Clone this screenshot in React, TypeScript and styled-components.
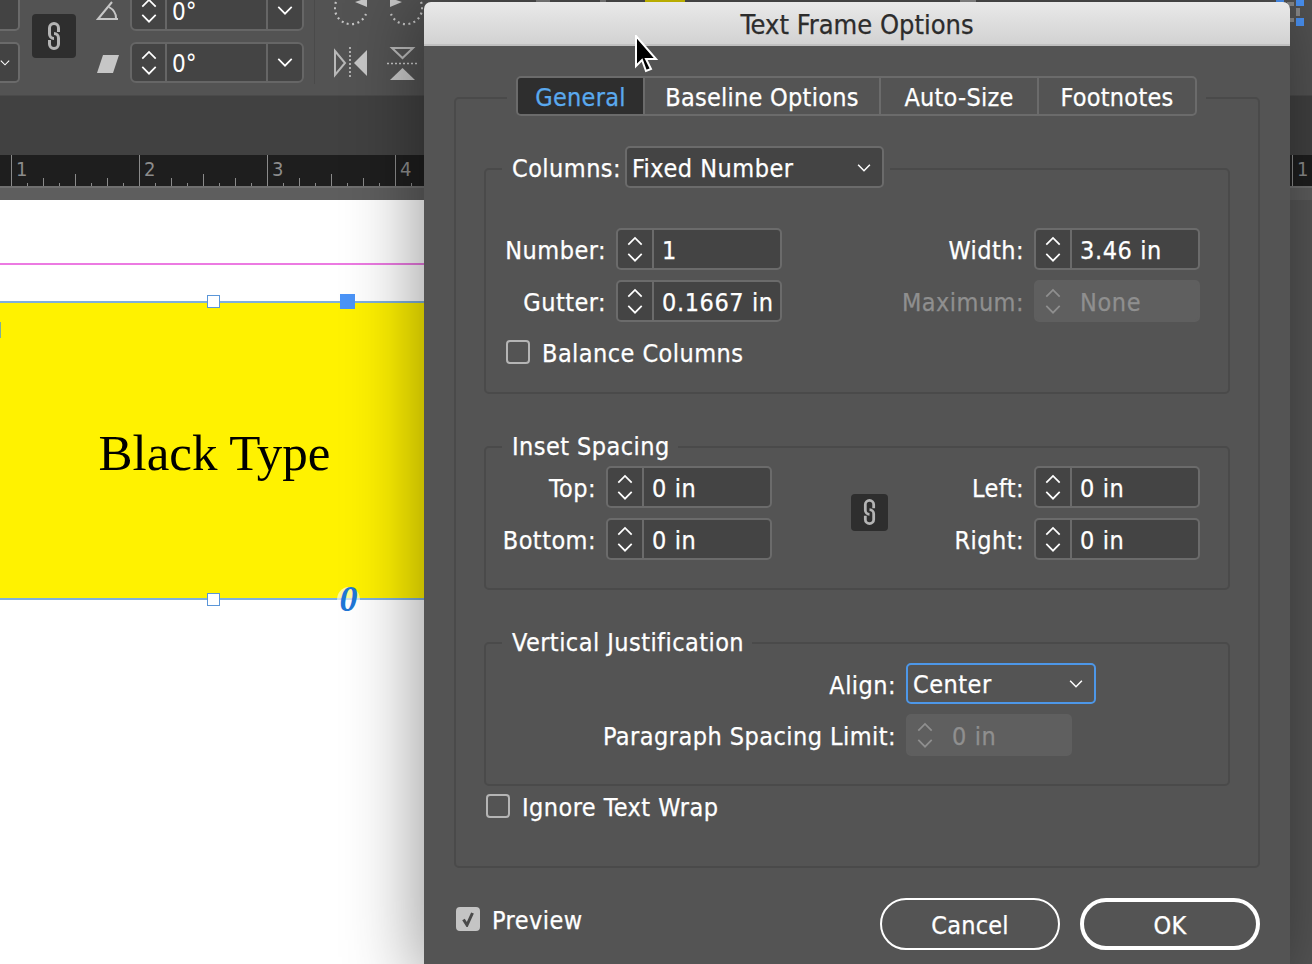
import React from "react";
import styled, { createGlobalStyle } from "styled-components";

const GlobalStyle = createGlobalStyle`
  html, body {
    margin: 0;
    padding: 0;
    background: #555555;
  }
  body {
    width: 1312px;
    height: 964px;
    overflow: hidden;
    font-family: "DejaVu Sans Condensed", "DejaVu Sans", "Noto Sans", sans-serif;
    font-stretch: condensed;
  }
`;

const Screen = styled.div`
  position: relative;
  width: 1312px;
  height: 964px;
  overflow: hidden;
  display: flex;
  flex-direction: column;
`;

/* ---------- app behind the dialog ---------- */

const ControlBar = styled.div`
  height: 96px;
  flex: none;
  box-sizing: border-box;
  background: #535353;
  border-bottom: 1px solid #4a4a4a;
  display: flex;
  align-items: flex-start;
  overflow: hidden;
`;

const ControlStack = styled.div`
  margin-top: -10px;
  display: flex;
  flex-direction: column;
  gap: 11px;
  flex: none;
`;

const LeftStub = styled(ControlStack)`
  width: 20px;
`;

const StubBox = styled.div`
  width: 20px;
  height: 41px;
  box-sizing: border-box;
  border: 2px solid #6a6a6a;
  border-left: 0;
  border-radius: 0 5px 5px 0;
  background: #434343;
  display: flex;
  align-items: center;
  color: #ffffff;
`;

const BarLink = styled.div`
  width: 44px;
  height: 44px;
  margin: 14px 20px 0 12px;
  flex: none;
  background: #2e2e2e;
  border-radius: 4px;
  display: flex;
  align-items: center;
  justify-content: center;
`;

const ShapeStack = styled(ControlStack)`
  width: 24px;
  margin-right: 10px;
  margin-top: 0;
  gap: 33px;
  padding-top: 1px;
`;

const AngleField = styled.div`
  width: 174px;
  height: 41px;
  box-sizing: border-box;
  display: flex;
  border: 2px solid #666666;
  border-radius: 6px;
  background: #444444;
  color: #ffffff;
  font-size: 24px;
`;

const AngleSpin = styled.div`
  width: 33px;
  flex: none;
  border-right: 2px solid #666666;
  display: flex;
  flex-direction: column;
  align-items: center;
  justify-content: center;
  gap: 6px;
`;

const AngleValue = styled.div`
  flex: 1;
  padding-left: 5px;
  line-height: 40px;
  border-right: 2px solid #666666;
`;

const AngleDrop = styled.div`
  width: 34px;
  flex: none;
  display: flex;
  align-items: center;
  justify-content: center;
`;

const BarDivider = styled.div`
  width: 1px;
  height: 84px;
  margin: 0 19px 0 10px;
  background: #4a4a4a;
  flex: none;
`;

const TransformGrid = styled.div`
  display: grid;
  grid-template-columns: 36px 36px;
  grid-template-rows: 34px 34px;
  column-gap: 17px;
  row-gap: 21px;
  margin-top: -8px;
  flex: none;
`;

const DarkBand = styled.div`
  height: 59px;
  flex: none;
  background: #414141;
`;

const Ruler = styled.div`
  height: 31px;
  flex: none;
  background: #1e1e1e;
  display: flex;
  padding-left: 11px;
`;

const RulerUnit = styled.div`
  position: relative;
  width: 128px;
  flex: none;
  box-sizing: border-box;
  border-left: 1px solid #8a8a8a;
  padding: 2px 0 0 4px;
  color: #8c8c8c;
  font-size: 20px;
  line-height: 24px;
`;

const RulerTicks = styled.svg`
  position: absolute;
  left: -1px;
  bottom: 0;
`;

const RulerEnd = styled(RulerUnit)`
  position: absolute;
  left: 1292px;
  top: 155px;
  height: 31px;
  width: 20px;
`;

const Pasteboard = styled.div`
  height: 14px;
  flex: none;
  background: #5e5e5e;
  border-top: 2px solid #6f6f6f;
  box-sizing: border-box;
`;

const PageArea = styled.div`
  flex: 1;
  background: #555555;
  display: flex;
`;

const Page = styled.div`
  width: 700px;
  flex: none;
  background: #ffffff;
  padding-top: 63px;
`;

const MarginGuide = styled.div`
  height: 2px;
  background: #ec7ae2;
  margin-bottom: 36px;
`;

const TextFrame = styled.div`
  position: relative;
  width: 100%;
  height: 299px;
  box-sizing: border-box;
  background: #fff200;
  border-top: 2px solid #7fb0dc;
  border-bottom: 2px solid #7fb0dc;
`;

const FrameText = styled.div`
  width: 429px;
  text-align: center;
  font-family: "Liberation Serif", "Times New Roman", serif;
  font-stretch: normal;
  font-size: 51px;
  line-height: 58px;
  color: #000000;
  padding-top: 121px;
`;

const Handle = styled.div<{ $x: number; $bottom?: boolean }>`
  position: absolute;
  left: ${(p) => p.$x}px;
  ${(p) => (p.$bottom ? "bottom: -8px;" : "top: -8px;")}
  width: 13px;
  height: 13px;
  box-sizing: border-box;
  background: #ffffff;
  border: 1px solid #5b96d8;
`;

const HandleSelected = styled.div`
  position: absolute;
  left: 340px;
  top: -9px;
  width: 15px;
  height: 15px;
  background: #4b94f7;
`;

const SideMark = styled.div`
  position: absolute;
  left: 0;
  top: 19px;
  width: 1px;
  height: 16px;
  background: #7fae9a;
`;

const OverflowMark = styled.div`
  position: absolute;
  left: 337px;
  bottom: -15px;
  width: 23px;
  height: 26px;
  border-radius: 50%;
  background: rgba(255, 255, 255, 0.6);
  color: #1f76d6;
  font-family: "Liberation Serif", serif;
  font-stretch: normal;
  font-style: italic;
  font-weight: 700;
  font-size: 36px;
  line-height: 25px;
  text-align: center;
`;

const TopScrap = styled.div<{ $x: number; $w: number; $c: string }>`
  position: absolute;
  top: 0;
  left: ${(p) => p.$x}px;
  width: ${(p) => p.$w}px;
  height: 3px;
  background: ${(p) => p.$c};
`;

const CornerDash = styled.div<{ $x: number; $y: number; $w: number; $h: number; $c: string }>`
  position: absolute;
  left: ${(p) => p.$x}px;
  top: ${(p) => p.$y}px;
  width: ${(p) => p.$w}px;
  height: ${(p) => p.$h}px;
  background: ${(p) => p.$c};
`;

/* ---------- dialog ---------- */

const Dialog = styled.div`
  position: absolute;
  left: 424px;
  top: 2px;
  width: 866px;
  height: 980px;
  background: #545454;
  border-radius: 7px 7px 0 0;
  box-shadow: -4px 0 75px rgba(0, 0, 0, 0.42);
  display: flex;
  flex-direction: column;
  -webkit-text-stroke: 0.25px;
`;

const TitleBar = styled.div`
  height: 44px;
  flex: none;
  box-sizing: border-box;
  background: linear-gradient(#e9e9e9, #d2d2d2);
  border-bottom: 2px solid #c0c0c0;
  border-radius: 7px 7px 0 0;
  color: #2c2c2c;
  font-size: 27px;
  line-height: 46px;
  text-align: center;
`;

const DialogBody = styled.div`
  padding: 51px 30px 0 30px;
  display: flex;
  flex-direction: column;
`;

const OuterGroup = styled.div`
  height: 771px;
  box-sizing: border-box;
  border: 2px solid #4a4a4a;
  border-radius: 5px;
  padding: 0 28px;
  display: flex;
  flex-direction: column;
`;

const TabBar = styled.div`
  align-self: center;
  margin: -23px 0 0 -1px;
  padding: 0 9px;
  background: #545454;
  display: flex;
`;

const TabGroup = styled.div`
  display: flex;
  height: 40px;
  box-sizing: border-box;
  border: 2px solid #6b6b6b;
  border-radius: 5px;
  overflow: hidden;
`;

const Tab = styled.div<{ $active?: boolean; $first?: boolean; $w: number }>`
  width: ${(p) => p.$w}px;
  box-sizing: border-box;
  text-align: center;
  font-size: 25px;
  letter-spacing: 0.25px;
  line-height: 40px;
  color: ${(p) => (p.$active ? "#5aa9ee" : "#ffffff")};
  background: ${(p) => (p.$active ? "#2e2e2e" : "transparent")};
  border-left: ${(p) => (p.$first ? "0" : "2px solid #6b6b6b")};
`;

const Section = styled.div<{ $h: number; $gap: number }>`
  height: ${(p) => p.$h}px;
  box-sizing: border-box;
  border: 2px solid #4a4a4a;
  border-radius: 5px;
  margin-top: ${(p) => p.$gap}px;
  padding-left: 18px;
  padding-right: 28px;
  display: flex;
  flex-direction: column;
`;

const SectionTitle = styled.div`
  align-self: flex-start;
  margin: -16px 0 0 -2px;
  padding: 0 8px 0 10px;
  background: #545454;
  color: #ffffff;
  font-size: 25px;
  letter-spacing: 0.45px;
  line-height: 30px;
`;

const ColumnsHead = styled.div`
  align-self: flex-start;
  margin: -24px 0 0 -2px;
  padding: 0 6px 0 10px;
  background: #545454;
  display: grid;
  grid-template-columns: 113px auto;
  align-items: center;
`;

const FieldGrid = styled.div<{ $top: number }>`
  margin-top: ${(p) => p.$top}px;
  display: grid;
  grid-template-columns: auto 1fr auto;
  align-items: center;
`;

const FieldStack = styled.div<{ $w?: number }>`
  ${(p) => (p.$w ? `width: ${p.$w}px;` : "")}
  display: flex;
  flex-direction: column;
  gap: 10px;
`;

const FieldRow = styled.div`
  display: flex;
  justify-content: flex-end;
  align-items: center;
  gap: 10px;
  height: 42px;
`;

const Label = styled.span<{ $off?: boolean }>`
  color: ${(p) => (p.$off ? "#8f8f8f" : "#ffffff")};
  font-size: 25px;
  letter-spacing: 0.45px;
  line-height: 30px;
  padding-top: 4px;
  white-space: nowrap;
`;

const NumField = styled.div<{ $off?: boolean }>`
  width: 166px;
  height: 42px;
  flex: none;
  box-sizing: border-box;
  display: flex;
  border: 2px solid ${(p) => (p.$off ? "#5f5f5f" : "#6b6b6b")};
  border-radius: 5px;
  background: ${(p) => (p.$off ? "#5f5f5f" : "#444444")};
  color: ${(p) => (p.$off ? "#8f8f8f" : "#ffffff")};
  font-size: 25px;
  letter-spacing: 0.6px;
`;

const Spin = styled.div<{ $off?: boolean }>`
  width: 36px;
  flex: none;
  box-sizing: border-box;
  border-right: 2px solid ${(p) => (p.$off ? "#5f5f5f" : "#6b6b6b")};
  display: flex;
  flex-direction: column;
  align-items: center;
  justify-content: center;
  gap: 7px;
`;

const NumValue = styled.div`
  flex: 1;
  min-width: 0;
  padding-left: 8px;
  line-height: 42px;
  white-space: nowrap;
`;

const CheckRow = styled.div<{ $top: number }>`
  margin-top: ${(p) => p.$top}px;
  margin-left: 2px;
  display: flex;
  align-items: center;
  gap: 12px;
`;

const CheckBox = styled.div<{ $on?: boolean }>`
  width: 24px;
  height: 24px;
  box-sizing: border-box;
  flex: none;
  border-radius: 4px;
  border: 2px solid ${(p) => (p.$on ? "#c4c4c4" : "#b5b5b5")};
  background: ${(p) => (p.$on ? "#c4c4c4" : "transparent")};
  display: flex;
  align-items: center;
  justify-content: center;
`;

const LinkBox = styled.div`
  justify-self: center;
  width: 37px;
  height: 37px;
  margin: 0 0 2px 13px;
  background: #2e2e2e;
  border-radius: 4px;
  display: flex;
  align-items: center;
  justify-content: center;
`;

const Select = styled.div<{ $w: number; $focus?: boolean }>`
  width: ${(p) => p.$w}px;
  height: ${(p) => (p.$focus ? 41 : 42)}px;
  flex: none;
  box-sizing: border-box;
  display: flex;
  align-items: center;
  justify-content: space-between;
  padding: 2px 11px 0 5px;
  border: 2px solid ${(p) => (p.$focus ? "#4d97e8" : "#6b6b6b")};
  border-radius: 5px;
  background: ${(p) => (p.$focus ? "#545454" : "#444444")};
  color: #ffffff;
  font-size: 25px;
  letter-spacing: 0.5px;
`;

const JustifyGrid = styled.div`
  margin-top: 5px;
  padding-right: 104px;
  display: grid;
  grid-template-columns: 1fr 190px;
  column-gap: 10px;
  row-gap: 10px;
  align-items: center;
  justify-items: end;
`;

const GridCell = styled.div`
  justify-self: start;
`;

const Footer = styled.div`
  margin-top: 30px;
  display: flex;
  justify-content: space-between;
  align-items: flex-start;
`;

const Buttons = styled.div`
  display: flex;
  gap: 20px;
`;

const Pill = styled.div<{ $primary?: boolean }>`
  width: 180px;
  height: 52px;
  box-sizing: border-box;
  border: ${(p) => (p.$primary ? "4px" : "2px")} solid #ffffff;
  border-radius: 26px;
  color: #ffffff;
  font-size: 25px;
  letter-spacing: 0.2px;
  line-height: ${(p) => (p.$primary ? "48px" : "52px")};
  text-align: center;
`;

const Cursor = styled.svg`
  position: absolute;
  left: 633px;
  top: 35px;
`;

/* ---------- drawings ---------- */

const Chevron = ({ up, size = 16, color = "#ffffff" }: { up?: boolean; size?: number; color?: string }) => (
  <svg width={size} height={size * 0.6} viewBox="0 0 16 10" fill="none">
    <path d={up ? "M1 9 L8 2 L15 9" : "M1 1 L8 8 L15 1"} stroke={color} strokeWidth="1.8" />
  </svg>
);

const ChainIcon = ({ h = 28 }: { h?: number }) => (
  <svg width={h / 2} height={h} viewBox="0 0 14 28" fill="none" stroke="#b4b4b4" strokeWidth="3">
    <path d="M11.5 10 V6 a4.5 4.5 0 0 0 -9 0 V12 a4.5 4.5 0 0 0 4.5 4.5" />
    <path d="M2.5 18 V22 a4.5 4.5 0 0 0 9 0 V16 a4.5 4.5 0 0 0 -4.5 -4.5" />
  </svg>
);

const CheckMark = () => (
  <svg width="14" height="16" viewBox="0 0 14 16" fill="none">
    <path d="M2.5 8.5 L6 14 L11.5 2" stroke="#4a4a4a" strokeWidth="3" />
  </svg>
);

const ShearIcon = () => (
  <svg width="24" height="20" viewBox="0 0 24 20">
    <path d="M7 1 H23 L17 19 H1 Z" fill="#c6c6c6" />
  </svg>
);

const AngleIcon = () => (
  <svg width="24" height="20" viewBox="0 0 24 20" fill="none" stroke="#c6c6c6" strokeWidth="2">
    <path d="M16 1 L2 18 H22" />
    <path d="M13 6 Q20 10 20 17" />
  </svg>
);

const RotateIcon = ({ flip }: { flip?: boolean }) => (
  <svg width="36" height="34" viewBox="0 0 36 34" style={flip ? { transform: "scaleX(-1)" } : undefined}>
    <path d="M2 10 A16 16 0 0 0 32 22" fill="none" stroke="#c6c6c6" strokeWidth="2.2" strokeDasharray="2 3.4" />
    <path d="M21 10 L33 6 V15 Z" fill="#c6c6c6" />
  </svg>
);

const FlipHIcon = () => (
  <svg width="36" height="34" viewBox="0 0 36 34" fill="none">
    <path d="M1 4 L11 16 L1 28 Z" stroke="#b8b8b8" strokeWidth="2" />
    <path d="M33 3 V29 L20 16 Z" fill="#c6c6c6" />
    <path d="M16 0 V32" stroke="#c6c6c6" strokeWidth="1.6" strokeDasharray="2 2" />
  </svg>
);

const FlipVIcon = () => (
  <svg width="32" height="34" viewBox="0 0 32 34" fill="none">
    <path d="M5 1 H26 L15.5 11 Z" stroke="#b8b8b8" strokeWidth="2" />
    <path d="M3 33 H28 L15.5 21 Z" fill="#c6c6c6" />
    <path d="M0 16.5 H32" stroke="#c6c6c6" strokeWidth="1.6" strokeDasharray="2 2" />
  </svg>
);

const Cents = [16, 32, 48, 64, 80, 96, 112];

const Ticks = () => (
  <RulerTicks width="128" height="14" viewBox="0 0 128 14">
    {Cents.map((x) => {
      const h = x === 64 ? 12 : x % 32 === 0 ? 8 : 3;
      return <rect key={x} x={x} y={14 - h} width="1" height={h} fill="#8a8a8a" />;
    })}
  </RulerTicks>
);

const Stepper = ({ off, value }: { off?: boolean; value: string }) => (
  <NumField $off={off}>
    <Spin $off={off}>
      <Chevron up color={off ? "#8f8f8f" : "#ffffff"} />
      <Chevron color={off ? "#8f8f8f" : "#ffffff"} />
    </Spin>
    <NumValue>{value}</NumValue>
  </NumField>
);

const LabeledStepper = ({ label, value, off }: { label: string; value: string; off?: boolean }) => (
  <FieldRow>
    <Label $off={off}>{label}</Label>
    <Stepper value={value} off={off} />
  </FieldRow>
);

const Angle = () => (
  <AngleField>
    <AngleSpin>
      <Chevron up />
      <Chevron />
    </AngleSpin>
    <AngleValue>0°</AngleValue>
    <AngleDrop>
      <Chevron />
    </AngleDrop>
  </AngleField>
);

const Tabs: { label: string; w: number }[] = [
  { label: "General", w: 125 },
  { label: "Baseline Options", w: 236 },
  { label: "Auto-Size", w: 158 },
  { label: "Footnotes", w: 158 },
];

export default function App() {
  return (
    <Screen>
      <GlobalStyle />

      <ControlBar>
        <LeftStub>
          <StubBox />
          <StubBox>
            <Chevron size={10} />
          </StubBox>
        </LeftStub>
        <BarLink>
          <ChainIcon />
        </BarLink>
        <ShapeStack>
          <AngleIcon />
          <ShearIcon />
        </ShapeStack>
        <ControlStack>
          <Angle />
          <Angle />
        </ControlStack>
        <BarDivider />
        <TransformGrid>
          <RotateIcon />
          <RotateIcon flip />
          <FlipHIcon />
          <FlipVIcon />
        </TransformGrid>
      </ControlBar>
      <DarkBand />
      <Ruler>
        {[1, 2, 3, 4].map((n) => (
          <RulerUnit key={n}>
            {n}
            <Ticks />
          </RulerUnit>
        ))}
      </Ruler>
      <RulerEnd>1</RulerEnd>
      <Pasteboard />
      <PageArea>
        <Page>
          <MarginGuide />
          <TextFrame>
            <FrameText>Black Type</FrameText>
            <SideMark />
            <Handle $x={207} />
            <HandleSelected />
            <Handle $x={207} $bottom />
            <OverflowMark>0</OverflowMark>
          </TextFrame>
        </Page>
      </PageArea>

      <TopScrap $x={645} $w={40} $c="#e8d800" />
      <TopScrap $x={536} $w={14} $c="#8a8a8a" />
      <TopScrap $x={600} $w={6} $c="#8a8a8a" />
      <TopScrap $x={960} $w={16} $c="#9a9a9a" />
      <CornerDash $x={1276} $y={0} $w={8} $h={2} $c="#4b94f7" />
      <CornerDash $x={1287} $y={2} $w={7} $h={4} $c="#8a8a8a" />
      <CornerDash $x={1296} $y={0} $w={8} $h={6} $c="#4b94f7" />
      <CornerDash $x={1296} $y={8} $w={4} $h={8} $c="#8a8a8a" />
      <CornerDash $x={1290} $y={18} $w={4} $h={4} $c="#8a8a8a" />
      <CornerDash $x={1296} $y={18} $w={8} $h={8} $c="#4b94f7" />

      <Dialog>
        <TitleBar>Text Frame Options</TitleBar>
        <DialogBody>
          <OuterGroup>
            <TabBar>
              <TabGroup>
                {Tabs.map((t, i) => (
                  <Tab key={t.label} $w={t.w} $active={i === 0} $first={i === 0}>
                    {t.label}
                  </Tab>
                ))}
              </TabGroup>
            </TabBar>

            <Section $h={226} $gap={52}>
              <ColumnsHead>
                <Label>Columns:</Label>
                <Select $w={259}>
                  Fixed Number
                  <Chevron size={14} />
                </Select>
              </ColumnsHead>
              <FieldGrid $top={40}>
                <FieldStack $w={278}>
                  <LabeledStepper label="Number:" value="1" />
                  <LabeledStepper label="Gutter:" value="0.1667 in" />
                </FieldStack>
                <span />
                <FieldStack>
                  <LabeledStepper label="Width:" value="3.46 in" />
                  <LabeledStepper label="Maximum:" value="None" off />
                </FieldStack>
              </FieldGrid>
              <CheckRow $top={13}>
                <CheckBox />
                <Label>Balance Columns</Label>
              </CheckRow>
            </Section>

            <Section $h={144} $gap={52}>
              <SectionTitle>Inset Spacing</SectionTitle>
              <FieldGrid $top={4}>
                <FieldStack $w={268}>
                  <LabeledStepper label="Top:" value="0 in" />
                  <LabeledStepper label="Bottom:" value="0 in" />
                </FieldStack>
                <LinkBox>
                  <ChainIcon h={26} />
                </LinkBox>
                <FieldStack>
                  <LabeledStepper label="Left:" value="0 in" />
                  <LabeledStepper label="Right:" value="0 in" />
                </FieldStack>
              </FieldGrid>
            </Section>

            <Section $h={144} $gap={52}>
              <SectionTitle>Vertical Justification</SectionTitle>
              <JustifyGrid>
                <Label>Align:</Label>
                <Select $w={190} $focus>
                  Center
                  <Chevron size={14} />
                </Select>
                <Label>Paragraph Spacing Limit:</Label>
                <GridCell>
                  <Stepper value="0 in" off />
                </GridCell>
              </JustifyGrid>
            </Section>

            <CheckRow $top={3}>
              <CheckBox />
              <Label>Ignore Text Wrap</Label>
            </CheckRow>
          </OuterGroup>

          <Footer>
            <CheckRow $top={4}>
              <CheckBox $on>
                <CheckMark />
              </CheckBox>
              <Label>Preview</Label>
            </CheckRow>
            <Buttons>
              <Pill>Cancel</Pill>
              <Pill $primary>OK</Pill>
            </Buttons>
          </Footer>
        </DialogBody>
      </Dialog>

      <Cursor width="26" height="38" viewBox="0 0 26 38">
        <path d="M3 1 L3 31 L9 25 L13 36 L18 34 L13 24 L23 24 Z" fill="#000000" stroke="#ffffff" strokeWidth="2" />
      </Cursor>
    </Screen>
  );
}
